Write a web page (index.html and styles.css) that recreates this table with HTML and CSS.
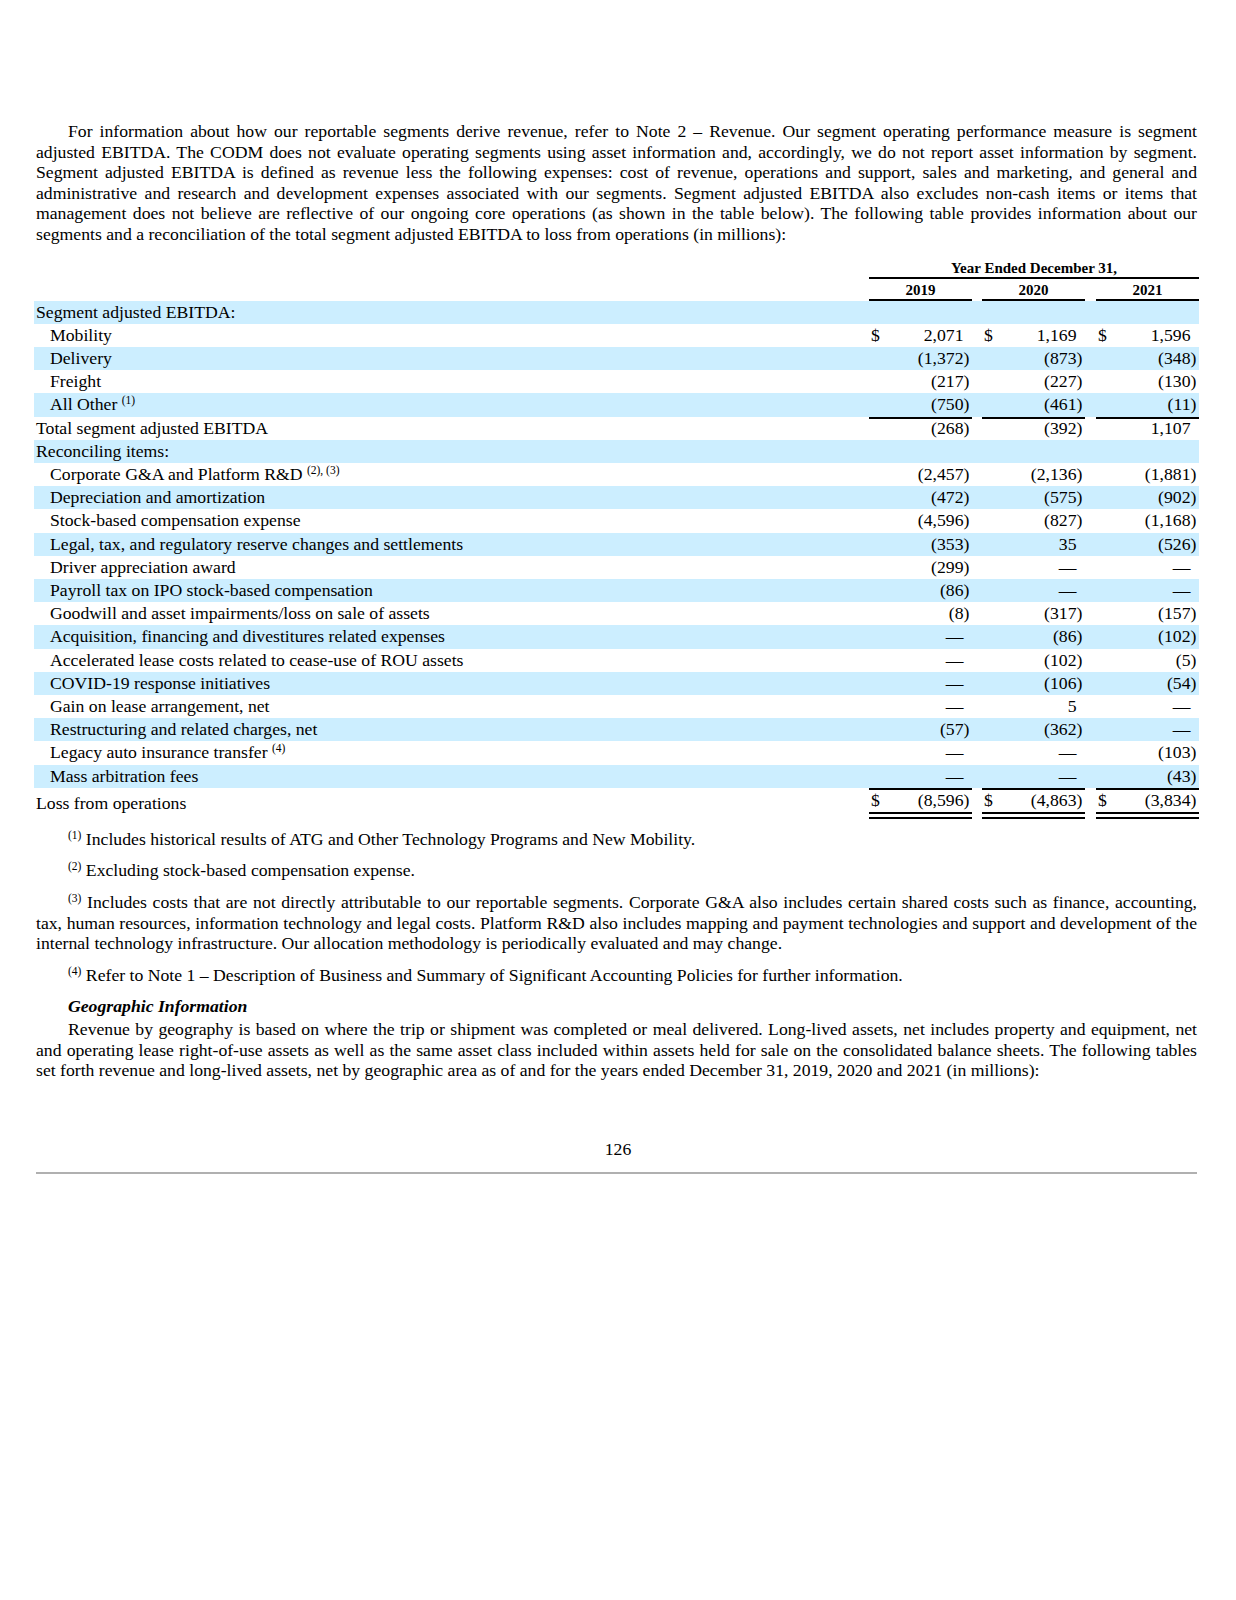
FILE: index.html
```html
<!DOCTYPE html>
<html lang="en">
<head>
<meta charset="utf-8">
<title>Segment Information</title>
<link rel="stylesheet" href="styles.css">
</head>
<body>
<div class="page">
  <p class="para indent">For information about how our reportable segments derive revenue, refer to Note 2 – Revenue. Our segment operating performance measure is segment adjusted EBITDA. The CODM does not evaluate operating segments using asset information and, accordingly, we do not report asset information by segment. Segment adjusted EBITDA is defined as revenue less the following expenses: cost of revenue, operations and support, sales and marketing, and general and administrative and research and development expenses associated with our segments. Segment adjusted EBITDA also excludes non-cash items or items that management does not believe are reflective of our ongoing core operations (as shown in the table below). The following table provides information about our segments and a reconciliation of the total segment adjusted EBITDA to loss from operations (in millions):</p>

  <table class="seg">
    <colgroup>
      <col class="c-label"><col class="c-amt"><col class="c-gap1"><col class="c-amt"><col class="c-gap2"><col class="c-amt">
    </colgroup>
    <thead>
      <tr class="h1"><th></th><th colspan="5" class="span-head">Year Ended December 31,</th></tr>
      <tr class="h2"><th></th><th class="yr">2019</th><th></th><th class="yr">2020</th><th></th><th class="yr">2021</th></tr>
    </thead>
    <tbody>
      <tr class="band"><td class="lbl">Segment adjusted EBITDA:</td><td></td><td></td><td></td><td></td><td></td></tr>
      <tr><td class="lbl sub">Mobility</td><td class="amt"><span class="cur">$</span>2,071</td><td></td><td class="amt"><span class="cur">$</span>1,169</td><td></td><td class="amt"><span class="cur">$</span>1,596</td></tr>
      <tr class="band"><td class="lbl sub">Delivery</td><td class="amt">(1,372<span class="p">)</span></td><td></td><td class="amt">(873<span class="p">)</span></td><td></td><td class="amt">(348<span class="p">)</span></td></tr>
      <tr><td class="lbl sub">Freight</td><td class="amt">(217<span class="p">)</span></td><td></td><td class="amt">(227<span class="p">)</span></td><td></td><td class="amt">(130<span class="p">)</span></td></tr>
      <tr class="band"><td class="lbl sub">All Other <sup>(1)</sup></td><td class="amt">(750<span class="p">)</span></td><td></td><td class="amt">(461<span class="p">)</span></td><td></td><td class="amt">(11<span class="p">)</span></td></tr>
      <tr class="rule-top"><td class="lbl">Total segment adjusted EBITDA</td><td class="amt">(268<span class="p">)</span></td><td></td><td class="amt">(392<span class="p">)</span></td><td></td><td class="amt">1,107</td></tr>
      <tr class="band"><td class="lbl">Reconciling items:</td><td></td><td></td><td></td><td></td><td></td></tr>
      <tr><td class="lbl sub">Corporate G&amp;A and Platform R&amp;D <sup>(2), (3)</sup></td><td class="amt">(2,457<span class="p">)</span></td><td></td><td class="amt">(2,136<span class="p">)</span></td><td></td><td class="amt">(1,881<span class="p">)</span></td></tr>
      <tr class="band"><td class="lbl sub">Depreciation and amortization</td><td class="amt">(472<span class="p">)</span></td><td></td><td class="amt">(575<span class="p">)</span></td><td></td><td class="amt">(902<span class="p">)</span></td></tr>
      <tr><td class="lbl sub">Stock-based compensation expense</td><td class="amt">(4,596<span class="p">)</span></td><td></td><td class="amt">(827<span class="p">)</span></td><td></td><td class="amt">(1,168<span class="p">)</span></td></tr>
      <tr class="band"><td class="lbl sub">Legal, tax, and regulatory reserve changes and settlements</td><td class="amt">(353<span class="p">)</span></td><td></td><td class="amt">35</td><td></td><td class="amt">(526<span class="p">)</span></td></tr>
      <tr><td class="lbl sub">Driver appreciation award</td><td class="amt">(299<span class="p">)</span></td><td></td><td class="amt">—</td><td></td><td class="amt">—</td></tr>
      <tr class="band"><td class="lbl sub">Payroll tax on IPO stock-based compensation</td><td class="amt">(86<span class="p">)</span></td><td></td><td class="amt">—</td><td></td><td class="amt">—</td></tr>
      <tr><td class="lbl sub">Goodwill and asset impairments/loss on sale of assets</td><td class="amt">(8<span class="p">)</span></td><td></td><td class="amt">(317<span class="p">)</span></td><td></td><td class="amt">(157<span class="p">)</span></td></tr>
      <tr class="band"><td class="lbl sub">Acquisition, financing and divestitures related expenses</td><td class="amt">—</td><td></td><td class="amt">(86<span class="p">)</span></td><td></td><td class="amt">(102<span class="p">)</span></td></tr>
      <tr><td class="lbl sub">Accelerated lease costs related to cease-use of ROU assets</td><td class="amt">—</td><td></td><td class="amt">(102<span class="p">)</span></td><td></td><td class="amt">(5<span class="p">)</span></td></tr>
      <tr class="band"><td class="lbl sub">COVID-19 response initiatives</td><td class="amt">—</td><td></td><td class="amt">(106<span class="p">)</span></td><td></td><td class="amt">(54<span class="p">)</span></td></tr>
      <tr><td class="lbl sub">Gain on lease arrangement, net</td><td class="amt">—</td><td></td><td class="amt">5</td><td></td><td class="amt">—</td></tr>
      <tr class="band"><td class="lbl sub">Restructuring and related charges, net</td><td class="amt">(57<span class="p">)</span></td><td></td><td class="amt">(362<span class="p">)</span></td><td></td><td class="amt">—</td></tr>
      <tr><td class="lbl sub">Legacy auto insurance transfer <sup>(4)</sup></td><td class="amt">—</td><td></td><td class="amt">—</td><td></td><td class="amt">(103<span class="p">)</span></td></tr>
      <tr class="band"><td class="lbl sub">Mass arbitration fees</td><td class="amt">—</td><td></td><td class="amt">—</td><td></td><td class="amt">(43<span class="p">)</span></td></tr>
      <tr class="rule-top total"><td class="lbl">Loss from operations</td><td class="amt dbl"><span class="cur">$</span>(8,596<span class="p">)</span></td><td></td><td class="amt dbl"><span class="cur">$</span>(4,863<span class="p">)</span></td><td></td><td class="amt dbl"><span class="cur">$</span>(3,834<span class="p">)</span></td></tr>
    </tbody>
  </table>

  <p class="note"><sup>(1)</sup> Includes historical results of ATG and Other Technology Programs and New Mobility.</p>
  <p class="note"><sup>(2)</sup> Excluding stock-based compensation expense.</p>
  <p class="note"><sup>(3)</sup> Includes costs that are not directly attributable to our reportable segments. Corporate G&amp;A also includes certain shared costs such as finance, accounting, tax, human resources, information technology and legal costs. Platform R&amp;D also includes mapping and payment technologies and support and development of the internal technology infrastructure. Our allocation methodology is periodically evaluated and may change.</p>
  <p class="note"><sup>(4)</sup> Refer to Note 1 – Description of Business and Summary of Significant Accounting Policies for further information.</p>

  <p class="subhead">Geographic Information</p>
  <p class="para indent">Revenue by geography is based on where the trip or shipment was completed or meal delivered. Long-lived assets, net includes property and equipment, net and operating lease right-of-use assets as well as the same asset class included within assets held for sale on the consolidated balance sheets. The following tables set forth revenue and long-lived assets, net by geographic area as of and for the years ended December 31, 2019, 2020 and 2021 (in millions):</p>

  <div class="pagenum">126</div>
  <hr class="page-rule">
</div>
</body>
</html>
```

FILE: styles.css
```css
html, body {
  margin: 0;
  padding: 0;
  background: #ffffff;
}

.page {
  width: 1161px;
  padding: 121px 39px 0 36px;
  font-family: "Liberation Serif", "Times New Roman", serif;
  font-size: 17.7px;
  line-height: 20.6px;
  color: #000000;
}

.para {
  margin: 0;
  text-align: justify;
}

.indent {
  text-indent: 32px;
}

/* ---------- table ---------- */
.seg {
  width: 1165px;
  margin: 13px 0 0 -2px;
  border-collapse: separate;
  border-spacing: 0;
  table-layout: fixed;
}

.c-label { width: 835px; }
.c-amt { width: 103px; }
.c-gap1 { width: 10px; }
.c-gap2 { width: 11px; }

.seg th,
.seg td {
  padding: 0;
  white-space: nowrap;
}

.seg thead th {
  font-size: 15px;
  font-weight: bold;
  line-height: 17px;
  text-align: center;
}

.seg .h1 th {
  padding-top: 2px;
}

.seg .h1 .span-head {
  border-bottom: 2px solid #000;
}

.seg .h2 th {
  padding-top: 3px;
}

.seg .h2 .yr {
  border-bottom: 2px solid #000;
}

.seg tbody td {
  height: 23.2px;
  line-height: 23.2px;
}

.seg .band td {
  background: #cceeff;
}

.seg .lbl {
  padding-left: 2px;
  text-align: left;
}

.seg .lbl.sub {
  padding-left: 16px;
}

.seg .amt {
  text-align: right;
  padding-right: 8.5px;
  padding-left: 2px;
}

.seg .cur {
  float: left;
}

.seg .p {
  margin-right: -5.9px;
}

.seg .rule-top .amt {
  box-shadow: inset 0 2px 0 #000;
}

.seg .total td {
  padding-top: 1px;
}

.seg .amt.dbl {
  border-bottom: 7px double #000;
}

.seg sup,
.note sup {
  font-size: 11.5px;
  line-height: 0;
  vertical-align: 6px;
}

/* ---------- footnotes ---------- */
.note {
  margin: 11.1px 0 0 0;
  text-indent: 32px;
  text-align: justify;
}

.seg + .note {
  margin-top: 9.5px;
}

.subhead {
  margin: 10.6px 0 0 0;
  text-indent: 32px;
  font-weight: bold;
  font-style: italic;
}

.subhead + .para {
  margin-top: 2.4px;
}

.pagenum {
  margin-top: 58px;
  text-align: center;
  margin-left: -36px;
  margin-right: -39px;
}

.page-rule {
  margin: 13px 0 0 0;
  border: 0;
  height: 2px;
  background: #b0b0b0;
}
```
